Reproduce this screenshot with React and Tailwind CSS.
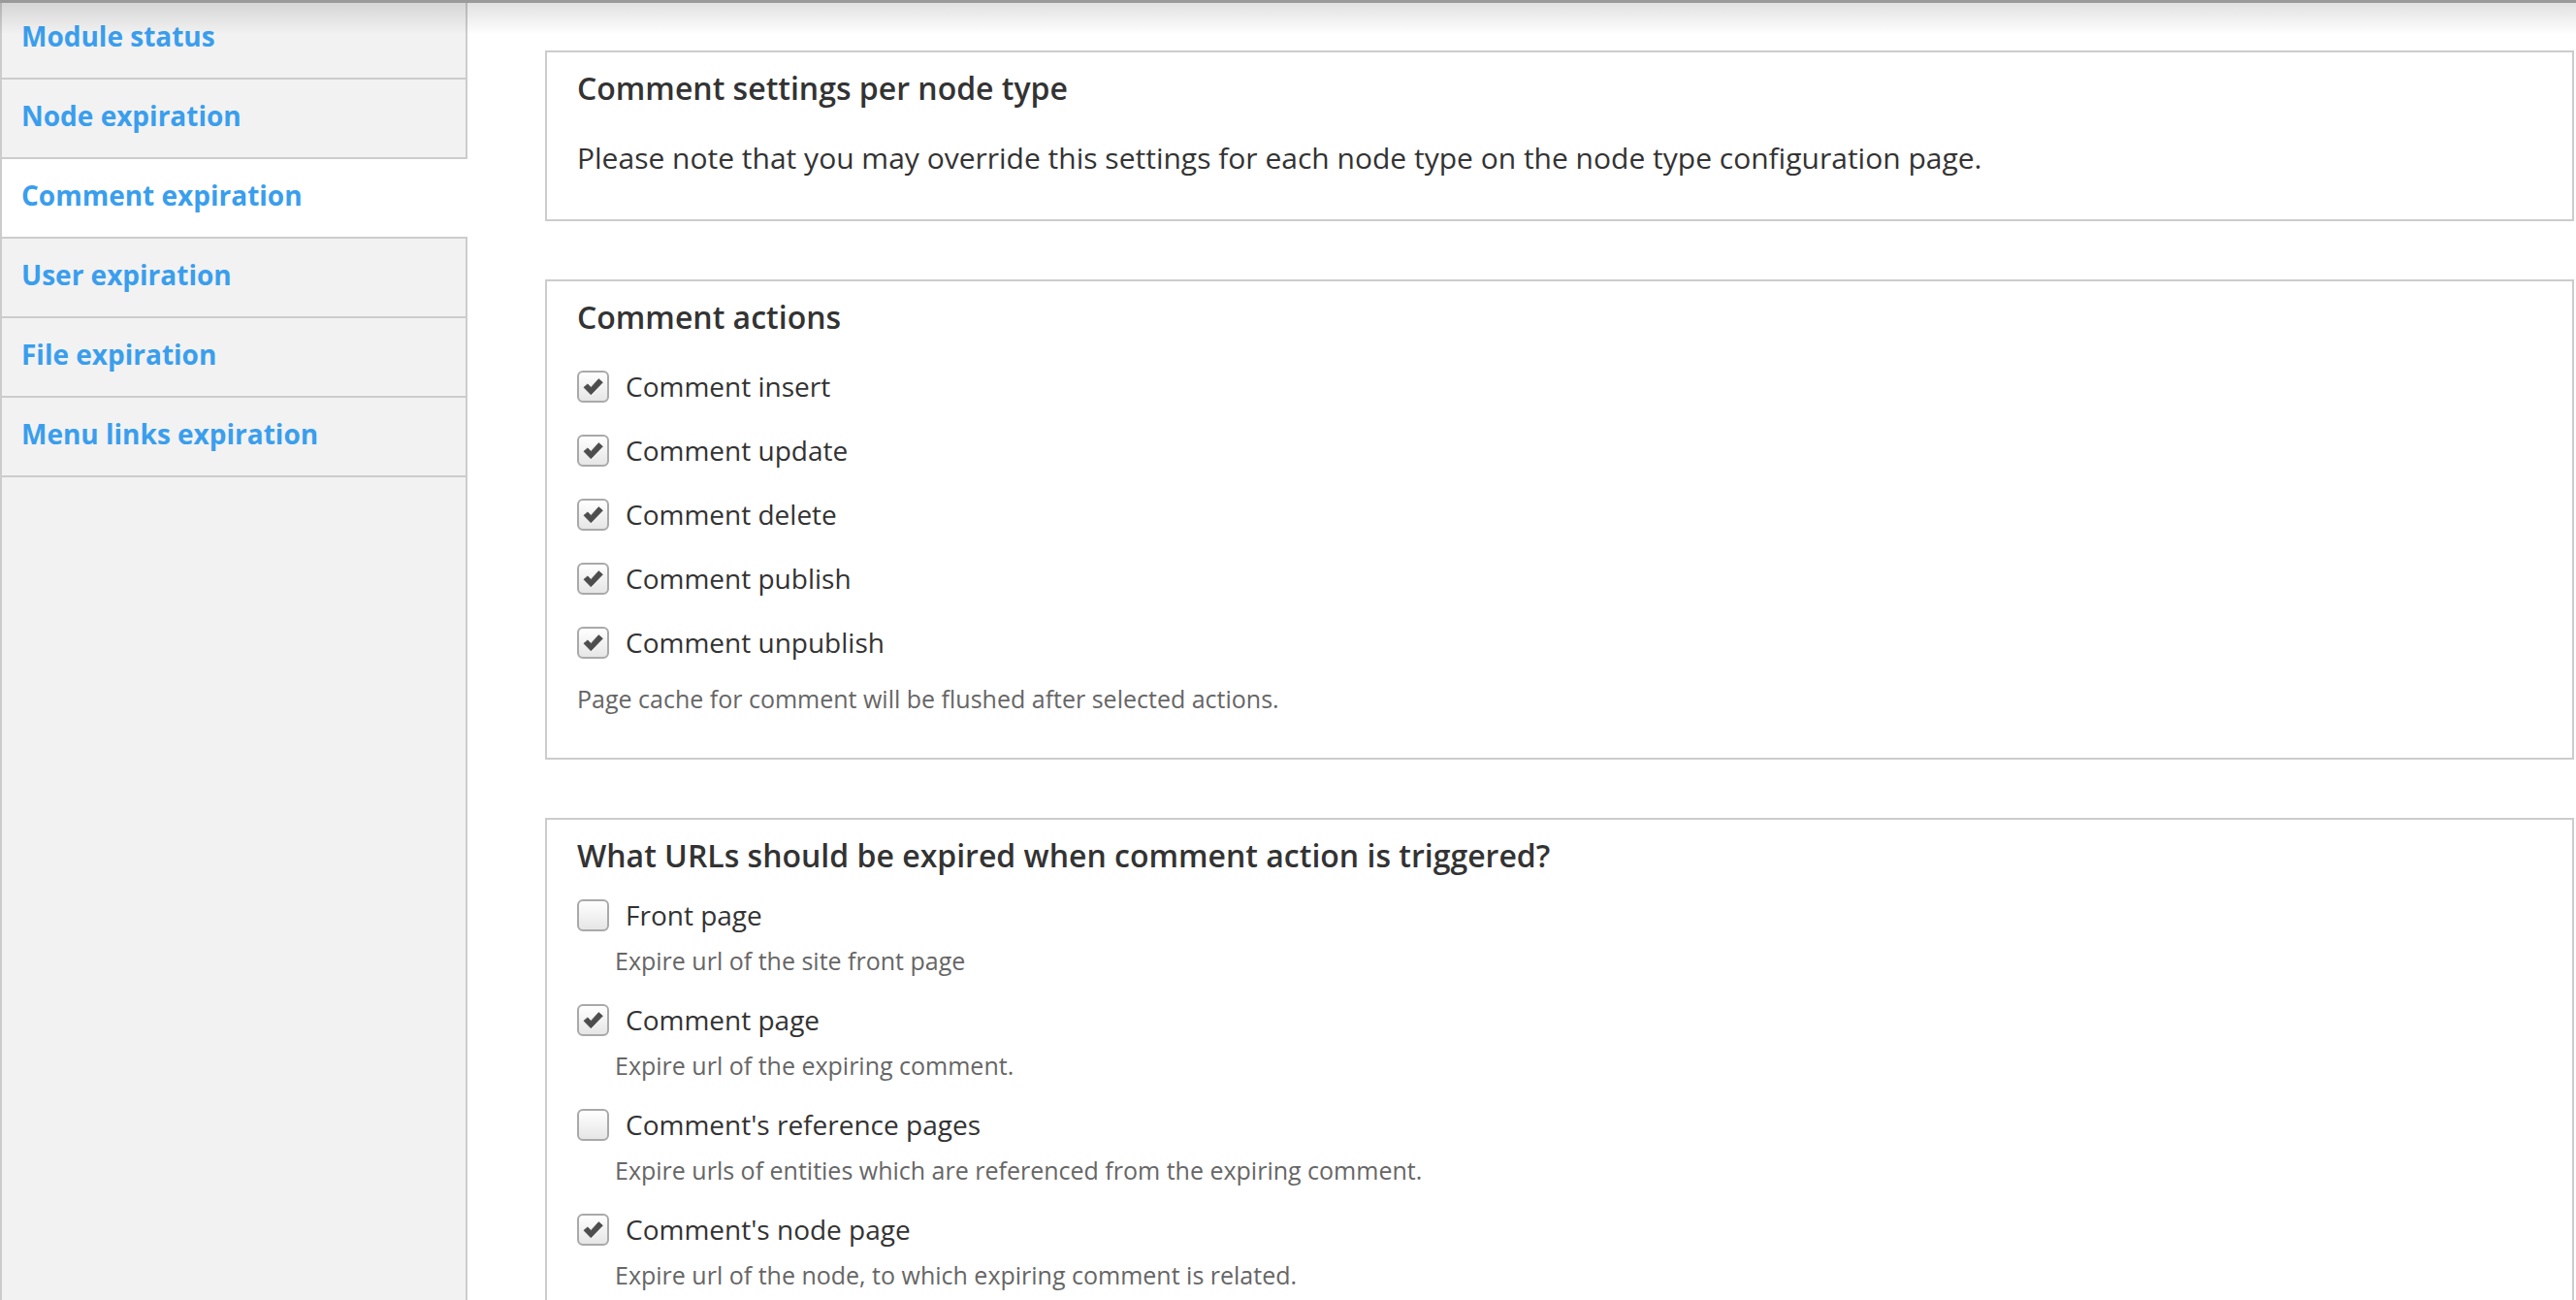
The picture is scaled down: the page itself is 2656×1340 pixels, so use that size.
import React from "react";

const tabs = [
  "Module status",
  "Node expiration",
  "Comment expiration",
  "User expiration",
  "File expiration",
  "Menu links expiration",
];

function Check({ checked }) {
  return (
    <span className="flex h-[33px] w-[33px] shrink-0 items-center justify-center rounded-[6px] border-2 border-[#a9a9a9] bg-gradient-to-b from-[#ffffff] to-[#e6e6e6]">
      {checked && (
        <svg width="23" height="19" viewBox="0 0 20 17">
          <path
            d="M1.5 9.2 L5 6.2 L8 9.4 L15.2 1.5 L18.8 4.6 L8 15.8 Z"
            fill="#4d4d4d"
            stroke="#4d4d4d"
            strokeWidth="0.8"
            strokeLinejoin="round"
          />
        </svg>
      )}
    </span>
  );
}

function Box({ title, children }) {
  return (
    <section className="border-2 border-[#cccccc] bg-white pl-[31px] pr-[31px] pt-[17px]">
      <h2 className="h-[40px] text-[32px] font-semibold leading-[40px] text-[#333333]">{title}</h2>
      {children}
    </section>
  );
}

export default function App() {
  return (
    <div
      className="relative flex h-[1340px] w-[2656px] overflow-hidden bg-white text-[#333333]"
      style={{ fontFamily: '"Open Sans", "Noto Sans", sans-serif' }}
    >
      <nav className="flex w-[482px] shrink-0 flex-col border-l-2 border-r-2 border-[#cccccc] bg-[#f2f2f2]">
        {tabs.map((t) => {
          const active = t === "Comment expiration";
          return (
            <div
              key={t}
              className={
                active
                  ? "-mr-[2px] h-[82px] border-b-2 border-[#cccccc] bg-white pl-[20px] pt-[17px]"
                  : "h-[82px] border-b-2 border-[#cccccc] pl-[20px] pt-[17px]"
              }
            >
              <span className="text-[28px] font-bold leading-[40px] text-[#3a9eed]">{t}</span>
            </div>
          );
        })}
      </nav>

      <main className="flex min-w-0 flex-1 flex-col gap-[60px] pl-[80px] pr-[2px] pt-[52px]">
        <Box title="Comment settings per node type">
          <p className="mt-[30px] pb-[41px] text-[30px] leading-[44px]">
            Please note that you may override this settings for each node type on the node type configuration page.
          </p>
        </Box>

        <Box title="Comment actions">
          <div className="mt-[18px] flex flex-col">
            {["Comment insert", "Comment update", "Comment delete", "Comment publish", "Comment unpublish"].map((l) => (
              <label key={l} className="flex h-[66px] items-center gap-[17px]">
                <Check checked />
                <span className="text-[28px] leading-[40px]">{l}</span>
              </label>
            ))}
          </div>
          <p className="mt-[7px] pb-[43px] text-[25px] leading-[36px] text-[#666666]">
            Page cache for comment will be flushed after selected actions.
          </p>
        </Box>

        <Box title="What URLs should be expired when comment action is triggered?">
          <div className="mt-[16px] flex flex-col gap-[18px] pb-[40px]">
            {[
              ["Front page", false, "Expire url of the site front page"],
              ["Comment page", true, "Expire url of the expiring comment."],
              ["Comment's reference pages", false, "Expire urls of entities which are referenced from the expiring comment."],
              ["Comment's node page", true, "Expire url of the node, to which expiring comment is related."],
            ].map(([l, c, d]) => (
              <div key={l} className="flex flex-col">
                <label className="flex h-[50px] items-center gap-[17px]">
                  <Check checked={c} />
                  <span className="text-[28px] leading-[40px]">{l}</span>
                </label>
                <p className="mt-[4px] pl-[39px] text-[25px] leading-[36px] text-[#666666]">{d}</p>
              </div>
            ))}
          </div>
        </Box>
      </main>

      <div className="pointer-events-none absolute inset-x-0 top-0 h-[36px] bg-gradient-to-b from-[rgba(0,0,0,0.13)] to-[rgba(0,0,0,0)]" />
      <div className="pointer-events-none absolute inset-x-0 top-0 h-[3px] bg-[#9a9a9a]" />
    </div>
  );
}
